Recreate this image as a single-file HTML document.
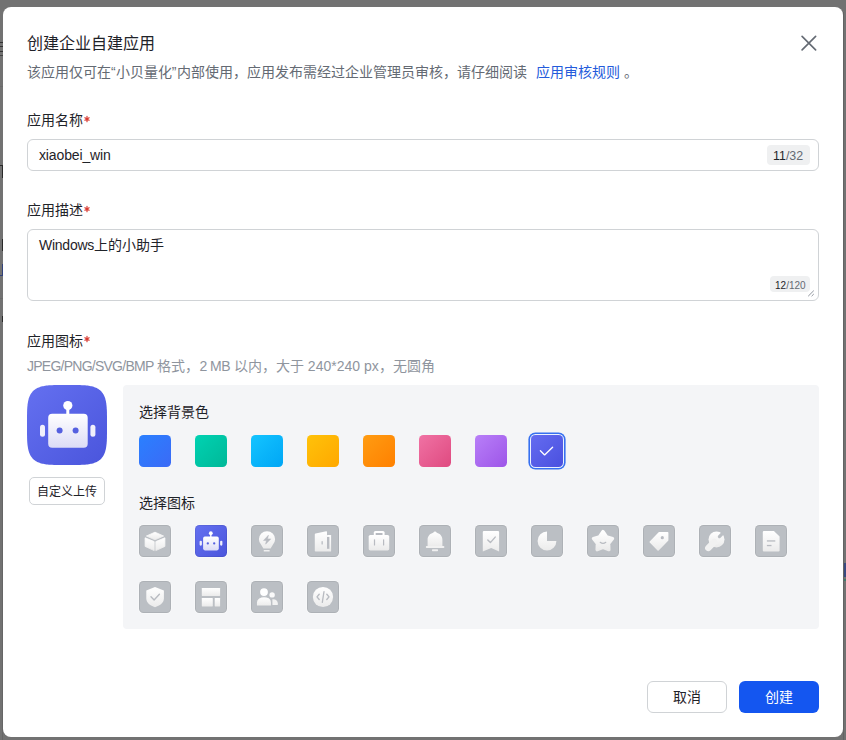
<!DOCTYPE html>
<html lang="zh-CN"><head><meta charset="utf-8">
<style>
*{box-sizing:border-box;margin:0;padding:0}
html,body{width:846px;height:740px;overflow:hidden;background:#727272;font-family:"Liberation Sans",sans-serif;color:#1f2329}
.a{position:absolute;white-space:nowrap}
#modal{position:absolute;left:3px;top:7px;width:840px;height:730px;background:#fff;border-radius:8px}
.t14{font-size:14px;line-height:20px}
.req{color:#f54a45;margin-left:1px}
.input{position:absolute;left:27px;width:792px;border:1px solid #d0d3d6;border-radius:6px;background:#fff}
.cnt{position:absolute;background:#eff0f1;border-radius:4px;color:#646a73}
.cnt b{font-weight:normal;color:#1f2329}
.sw{position:absolute;top:435px;width:32px;height:32px;border-radius:4.5px}
.tile{position:absolute;width:32px;height:32px;border-radius:4.5px;background:#bbbfc4;box-shadow:inset 0 0 0 1px rgba(0,0,0,.07),0 0 0 1px rgba(255,255,255,.3)}
.tile svg{position:absolute;left:0;top:0}
.btn{position:absolute;top:681px;width:80px;height:32px;border-radius:6px;font-size:14px;line-height:30px;text-align:center}
</style></head><body>
<div id="modal"></div>
<!-- page fragments -->
<div class="a" style="left:843px;top:12px;width:1px;height:728px;background:rgba(0,0,0,.13)"></div>
<div class="a" style="left:2px;top:420px;width:1px;height:320px;background:rgba(0,0,0,.1)"></div>
<div class="a" style="left:0;top:42px;width:3px;height:1px;background:#333"></div>
<div class="a" style="left:0;top:46px;width:3px;height:1px;background:#333"></div>
<div class="a" style="left:0;top:51px;width:3px;height:1px;background:#333"></div>
<div class="a" style="left:0;top:55px;width:3px;height:1px;background:#444"></div>
<div class="a" style="left:0;top:86px;width:3px;height:1px;background:#6a6a6a"></div>
<div class="a" style="left:0;top:165px;width:3px;height:1px;background:#2a2a2a"></div>
<div class="a" style="left:2px;top:165px;width:1px;height:13px;background:#2a2a2a"></div>
<div class="a" style="left:2px;top:239px;width:1px;height:12px;background:#2a2a2a"></div>
<div class="a" style="left:0;top:264px;width:3px;height:12px;border-right:1px solid #33427a;border-bottom:1px solid #33427a"></div>
<div class="a" style="left:0;top:298px;width:3px;height:1px;background:#6a6a6a"></div>
<div class="a" style="left:0;top:316px;width:3px;height:6px;border-right:1px solid #2a2a2a"></div>
<div class="a" style="left:844px;top:563px;width:2px;height:14px;background:#3a4a80"></div>
<div class="a" style="left:844px;top:579px;width:2px;height:2px;background:#3f7a6a"></div>


<div class="a" style="left:27px;top:33px;font-size:16px;line-height:22px;color:#1f2329">创建企业自建应用</div>
<svg class="a" style="left:801px;top:35px" width="16" height="16" viewBox="0 0 16 16"><path d="M1.1 1.4L14.6 14.9M14.6 1.4L1.1 14.9" stroke="#646a73" stroke-width="1.6" stroke-linecap="round"/></svg>

<div class="a t14" style="left:27px;top:62px;color:#646a73">该应用仅可在“小贝量化<span style="margin-right:1px">”</span>内部使用，应用发布需经过企业管理员审核，请仔细阅读 <span style="color:#245bdb;margin-left:5px">应用审核规则</span> 。</div>

<div class="a t14" style="left:27px;top:110px">应用名称</div>
<div class="input" style="top:139px;height:32px"></div>
<div class="a t14" style="left:39px;top:145px"><span style="letter-spacing:-0.13px">xiaobei_win</span></div>
<div class="cnt" style="left:767px;top:145px;width:43px;height:20px"></div>
<div class="a" style="left:773px;top:147px;font-size:12.4px;line-height:18px;color:#646a73"><b style="font-weight:normal;color:#1f2329">11</b>/32</div>

<div class="a t14" style="left:27px;top:200px">应用描述</div>
<div class="input" style="top:229px;height:72px"></div>
<div class="a t14" style="left:39px;top:235px"><span style="letter-spacing:-0.25px">Windows</span>上的小助手</div>
<div class="cnt" style="left:770px;top:276px;width:40px;height:16px"></div>
<div class="a" style="left:775px;top:279px;font-size:10px;line-height:14px;color:#646a73"><b style="font-weight:normal;color:#1f2329">12</b>/120</div>
<svg class="a" style="left:807px;top:289px" width="9" height="9" viewBox="0 0 9 9"><path d="M1.2 7.2L6.8 1.6M4.6 7.2L6.8 5" stroke="#8f959e" stroke-width="1"/></svg>

<div class="a t14" style="left:27px;top:331px">应用图标</div>
<div class="a t14" style="left:27px;top:356px;color:#8f959e"><span style="letter-spacing:-0.75px">JPEG/PNG/SVG/BMP</span> 格式，<span style="letter-spacing:-0.5px">2 MB</span> 以内，大于 240*240 px，无圆角</div>


<svg class="a" style="left:82.8px;top:114.9px" width="8" height="8" viewBox="0 0 8 8"><path d="M4 1.3V6.7M1.9 2.7L6.1 5.3M6.1 2.7L1.9 5.3" stroke="#d83931" stroke-width="1.15" stroke-linecap="round"/></svg>
<svg class="a" style="left:82.8px;top:204.9px" width="8" height="8" viewBox="0 0 8 8"><path d="M4 1.3V6.7M1.9 2.7L6.1 5.3M6.1 2.7L1.9 5.3" stroke="#d83931" stroke-width="1.15" stroke-linecap="round"/></svg>
<svg class="a" style="left:82.8px;top:334.9px" width="8" height="8" viewBox="0 0 8 8"><path d="M4 1.3V6.7M1.9 2.7L6.1 5.3M6.1 2.7L1.9 5.3" stroke="#d83931" stroke-width="1.15" stroke-linecap="round"/></svg>
<!-- preview icon -->
<svg class="a" style="left:27px;top:385px" width="80" height="80" viewBox="0 0 80 80">
<defs>
<linearGradient id="pg" x1="0" y1="0" x2="1" y2="1"><stop offset="0" stop-color="#6470f0"/><stop offset="1" stop-color="#4a55dc"/></linearGradient>
<linearGradient id="hg" x1="0" y1="0" x2="0" y2="1"><stop offset="0" stop-color="#ffffff"/><stop offset="1" stop-color="#dcdcf6"/></linearGradient>
</defs>
<path id="sqp" d="M80.00 40.00 L79.99 47.70 L79.96 50.71 L79.92 52.98 L79.85 54.88 L79.76 56.54 L79.66 58.02 L79.54 59.37 L79.40 60.62 L79.24 61.78 L79.06 62.87 L78.86 63.89 L78.64 64.85 L78.40 65.77 L78.14 66.64 L77.86 67.46 L77.56 68.25 L77.24 69.00 L76.90 69.72 L76.54 70.40 L76.16 71.06 L75.76 71.68 L75.33 72.28 L74.88 72.85 L74.41 73.39 L73.91 73.91 L73.39 74.41 L72.85 74.88 L72.28 75.33 L71.68 75.76 L71.06 76.16 L70.40 76.54 L69.72 76.90 L69.00 77.24 L68.25 77.56 L67.46 77.86 L66.64 78.14 L65.77 78.40 L64.85 78.64 L63.89 78.86 L62.87 79.06 L61.78 79.24 L60.62 79.40 L59.37 79.54 L58.02 79.66 L56.54 79.76 L54.88 79.85 L52.98 79.92 L50.71 79.96 L47.70 79.99 L40.00 80.00 L32.30 79.99 L29.29 79.96 L27.02 79.92 L25.12 79.85 L23.46 79.76 L21.98 79.66 L20.63 79.54 L19.38 79.40 L18.22 79.24 L17.13 79.06 L16.11 78.86 L15.15 78.64 L14.23 78.40 L13.36 78.14 L12.54 77.86 L11.75 77.56 L11.00 77.24 L10.28 76.90 L9.60 76.54 L8.94 76.16 L8.32 75.76 L7.72 75.33 L7.15 74.88 L6.61 74.41 L6.09 73.91 L5.59 73.39 L5.12 72.85 L4.67 72.28 L4.24 71.68 L3.84 71.06 L3.46 70.40 L3.10 69.72 L2.76 69.00 L2.44 68.25 L2.14 67.46 L1.86 66.64 L1.60 65.77 L1.36 64.85 L1.14 63.89 L0.94 62.87 L0.76 61.78 L0.60 60.62 L0.46 59.37 L0.34 58.02 L0.24 56.54 L0.15 54.88 L0.08 52.98 L0.04 50.71 L0.01 47.70 L0.00 40.00 L0.01 32.30 L0.04 29.29 L0.08 27.02 L0.15 25.12 L0.24 23.46 L0.34 21.98 L0.46 20.63 L0.60 19.38 L0.76 18.22 L0.94 17.13 L1.14 16.11 L1.36 15.15 L1.60 14.23 L1.86 13.36 L2.14 12.54 L2.44 11.75 L2.76 11.00 L3.10 10.28 L3.46 9.60 L3.84 8.94 L4.24 8.32 L4.67 7.72 L5.12 7.15 L5.59 6.61 L6.09 6.09 L6.61 5.59 L7.15 5.12 L7.72 4.67 L8.32 4.24 L8.94 3.84 L9.60 3.46 L10.28 3.10 L11.00 2.76 L11.75 2.44 L12.54 2.14 L13.36 1.86 L14.23 1.60 L15.15 1.36 L16.11 1.14 L17.13 0.94 L18.22 0.76 L19.38 0.60 L20.63 0.46 L21.98 0.34 L23.46 0.24 L25.12 0.15 L27.02 0.08 L29.29 0.04 L32.30 0.01 L40.00 0.00 L47.70 0.01 L50.71 0.04 L52.98 0.08 L54.88 0.15 L56.54 0.24 L58.02 0.34 L59.37 0.46 L60.62 0.60 L61.78 0.76 L62.87 0.94 L63.89 1.14 L64.85 1.36 L65.77 1.60 L66.64 1.86 L67.46 2.14 L68.25 2.44 L69.00 2.76 L69.72 3.10 L70.40 3.46 L71.06 3.84 L71.68 4.24 L72.28 4.67 L72.85 5.12 L73.39 5.59 L73.91 6.09 L74.41 6.61 L74.88 7.15 L75.33 7.72 L75.76 8.32 L76.16 8.94 L76.54 9.60 L76.90 10.28 L77.24 11.00 L77.56 11.75 L77.86 12.54 L78.14 13.36 L78.40 14.23 L78.64 15.15 L78.86 16.11 L79.06 17.13 L79.24 18.22 L79.40 19.38 L79.54 20.63 L79.66 21.98 L79.76 23.46 L79.85 25.12 L79.92 27.02 L79.96 29.29 L79.99 32.30Z" fill="url(#pg)"/>
<circle cx="40.8" cy="20.6" r="4.6" fill="#fff"/>
<rect x="39.3" y="22" width="3" height="8" fill="#fff"/>
<rect x="21.2" y="28.7" width="39.5" height="34" rx="4" fill="url(#hg)"/>
<rect x="13" y="39.7" width="5" height="12" rx="2.5" fill="#f0f0fb"/>
<rect x="63.4" y="39.7" width="5" height="12" rx="2.5" fill="#f0f0fb"/>
<circle cx="32.6" cy="45.6" r="3" fill="#5560e0"/>
<circle cx="48.6" cy="45.6" r="3" fill="#5560e0"/>
</svg>
<div class="a" style="left:29px;top:477px;width:76px;height:28px;border:1px solid #d0d3d6;border-radius:5px;font-size:12px;line-height:28px;text-align:center">自定义上传</div>

<!-- panel -->
<div class="a" style="left:123px;top:385px;width:696px;height:244px;background:#f4f5f7;border-radius:4px"></div>
<div class="a t14" style="left:139px;top:402px">选择背景色</div>
<div class="sw" style="left:139px;background:linear-gradient(135deg,#2a80ff,#3b6af6)"></div>
<div class="sw" style="left:195px;background:linear-gradient(135deg,#00d2b2,#00b898)"></div>
<div class="sw" style="left:251px;background:linear-gradient(135deg,#14c4ff,#00a6f5)"></div>
<div class="sw" style="left:307px;background:linear-gradient(135deg,#ffc20a,#ffa800)"></div>
<div class="sw" style="left:363px;background:linear-gradient(135deg,#ff9c12,#ff8000)"></div>
<div class="sw" style="left:419px;background:linear-gradient(135deg,#f072a4,#df4a80)"></div>
<div class="sw" style="left:475px;background:linear-gradient(135deg,#b87ff8,#9d55e8)"></div>
<div class="sw" style="left:531px;background:linear-gradient(135deg,#646cf0,#4a50df);box-shadow:0 0 0 1px rgba(255,255,255,.9),0 0 0 2.6px #3670f0"></div>
<svg class="a" style="left:531px;top:435px" width="32" height="32" viewBox="0 0 32 32"><path d="M9.4 15.8L13.6 19.9L21.6 12.3" fill="none" stroke="#fff" stroke-width="1.35" stroke-linecap="round" stroke-linejoin="round"/></svg>

<div class="a t14" style="left:139px;top:493px">选择图标</div>
<!--TILES-->
<svg width="0" height="0" style="position:absolute"><defs>
<linearGradient id="wg" x1="0" y1="0" x2="0" y2="1"><stop offset="0" stop-color="#ffffff"/><stop offset="1" stop-color="#ebebeb"/></linearGradient>
<linearGradient id="hg2" x1="0" y1="0" x2="0" y2="1"><stop offset="0" stop-color="#ffffff"/><stop offset="1" stop-color="#dcdcf6"/></linearGradient>
<linearGradient id="tg" x1="0" y1="0" x2="1" y2="1"><stop offset="0" stop-color="#6470f0"/><stop offset="1" stop-color="#4a55dc"/></linearGradient>
</defs></svg>
<div class="tile" style="left:139px;top:525px;"><svg width="32" height="32" viewBox="0 0 32 32"><g fill="url(#wg)" stroke="url(#wg)" stroke-width="0.8" stroke-linejoin="round">
 <path d="M16 7.2L24.6 11L16 14.8L7.4 11Z"/>
 <path d="M6.1 12.8L15.2 16.6V25.6L6.1 21.4Z"/>
 <path d="M25.9 12.8L16.8 16.6V25.6L25.9 21.4Z"/></g></svg></div>
<div class="tile" style="left:195px;top:525px;background:linear-gradient(135deg,#6470f0,#4a55dc);"><svg width="32" height="32" viewBox="0 0 32 32"><circle cx="15.8" cy="8.2" r="1.9" fill="#fff"/><rect x="15.1" y="9" width="1.4" height="3" fill="#fff"/>
 <rect x="8.1" y="11.6" width="15.7" height="13.8" rx="1.8" fill="url(#hg2)"/>
 <rect x="4.6" y="15.7" width="2.3" height="5" rx="1.1" fill="#eeeefb"/>
 <rect x="25.1" y="15.7" width="2.3" height="5" rx="1.1" fill="#eeeefb"/>
 <circle cx="12.8" cy="18.4" r="1.15" fill="#5560e0"/><circle cx="19.2" cy="18.4" r="1.15" fill="#5560e0"/></svg></div>
<div class="tile" style="left:251px;top:525px;"><svg width="32" height="32" viewBox="0 0 32 32"><path d="M10.3 20A8.1 8.1 0 1 1 21.7 20L19.6 23.6H12.4Z" fill="url(#wg)"/>
 <rect x="12.7" y="25" width="6" height="1.6" rx="0.5" fill="#f0f0f0"/>
 <path d="M17.4 10.2L12.5 15.5H15.4L14.6 19.2L19.8 13.9H16.6Z" fill="#b8bbc1" stroke="#b8bbc1" stroke-width="0.5" stroke-linejoin="round"/></svg></div>
<div class="tile" style="left:307px;top:525px;"><svg width="32" height="32" viewBox="0 0 32 32"><path d="M7.8 9.4Q7.8 8.6 8.6 8.4L19.2 6.3Q20 6.2 20 7V26.5H8.6Q7.8 26.5 7.8 25.7Z" fill="url(#wg)"/>
 <rect x="20" y="10" width="4.1" height="16.5" rx="0.6" fill="url(#wg)"/>
 <rect x="20" y="11.9" width="2.4" height="11.9" fill="#b8bbc1"/>
 <rect x="14.5" y="16.1" width="1.3" height="3.5" rx="0.65" fill="#b8bbc1"/></svg></div>
<div class="tile" style="left:363px;top:525px;"><svg width="32" height="32" viewBox="0 0 32 32"><rect x="10.8" y="5.9" width="10.8" height="6" rx="1.6" fill="#fff"/>
 <rect x="12.7" y="8" width="6.8" height="2.2" fill="#b8bbc1"/>
 <rect x="5.7" y="10" width="20.5" height="15.4" rx="1.6" fill="url(#wg)"/>
 <rect x="10.9" y="14.2" width="1.2" height="6.4" rx="0.6" fill="#b8bbc1"/>
 <rect x="20" y="14.2" width="1.2" height="6.4" rx="0.6" fill="#b8bbc1"/></svg></div>
<div class="tile" style="left:419px;top:525px;"><svg width="32" height="32" viewBox="0 0 32 32"><path d="M8.6 21.4V14.8C8.6 11.2 11 8.6 14.2 7.8Q15 6.5 16 6.5Q17 6.5 17.8 7.8C21 8.6 23.4 11.2 23.4 14.8V21.4Z" fill="url(#wg)"/>
 <rect x="6.8" y="21" width="18.6" height="1.9" rx="0.9" fill="#f1f1f1"/>
 <rect x="13" y="24.3" width="6" height="1.9" rx="0.6" fill="#f0f0f0"/></svg></div>
<div class="tile" style="left:475px;top:525px;"><svg width="32" height="32" viewBox="0 0 32 32"><path d="M7.8 7Q7.8 5.9 8.9 5.9H23Q24.1 5.9 24.1 7V26.5L16.2 23.1L7.8 26.5Z" fill="url(#wg)"/>
 <path d="M12.8 14.9L15.4 17.6L20.2 12.1" fill="none" stroke="#b8bbc1" stroke-width="1.4" stroke-linecap="round" stroke-linejoin="round"/></svg></div>
<div class="tile" style="left:531px;top:525px;"><svg width="32" height="32" viewBox="0 0 32 32"><path d="M16 16V6.6A9.4 9.4 0 1 0 25.4 16Z" fill="url(#wg)"/></svg></div>
<div class="tile" style="left:587px;top:525px;"><svg width="32" height="32" viewBox="0 0 32 32"><path d="M16.00 6.50 L19.53 11.75 L25.61 13.48 L21.71 18.45 L21.94 24.77 L16.00 22.60 L10.06 24.77 L10.29 18.45 L6.39 13.48 L12.47 11.75Z" fill="url(#wg)" stroke="url(#wg)" stroke-width="3.2" stroke-linejoin="round"/>
 <path d="M13.2 17.3Q16 19.6 18.8 17.3" fill="none" stroke="#b8bbc1" stroke-width="1.2" stroke-linecap="round"/></svg></div>
<div class="tile" style="left:643px;top:525px;"><svg width="32" height="32" viewBox="0 0 32 32"><path d="M7.3 17L16.2 7.8H24.6V15.2L15.1 24.9Z" fill="url(#wg)" stroke="url(#wg)" stroke-width="1.6" stroke-linejoin="round"/>
 <circle cx="19.3" cy="12.7" r="1.6" fill="#b8bbc1"/></svg></div>
<div class="tile" style="left:699px;top:525px;"><svg width="32" height="32" viewBox="0 0 32 32"><circle cx="17.5" cy="14.4" r="8" fill="url(#wg)"/>
 <path d="M15.2 17L9.3 22.9" stroke="#f1f1f1" stroke-width="6.4" stroke-linecap="round"/>
 <path d="M20.4 11.6L25.6 6.4" stroke="#bbbfc4" stroke-width="3.2" stroke-linecap="round"/></svg></div>
<div class="tile" style="left:755px;top:525px;"><svg width="32" height="32" viewBox="0 0 32 32"><path d="M7.8 7Q7.8 5.9 8.9 5.9H18.9L24.6 11.4V25.4Q24.6 26.5 23.5 26.5H8.9Q7.8 26.5 7.8 25.4Z" fill="url(#wg)"/>
 <rect x="11.9" y="15.3" width="8.4" height="1.3" fill="#b8bbc1"/>
 <rect x="11.9" y="19.9" width="4.6" height="1.3" fill="#b8bbc1"/></svg></div>
<div class="tile" style="left:139px;top:581px;"><svg width="32" height="32" viewBox="0 0 32 32"><path d="M16 5.9L24.9 9.6V17.6C24.9 21.9 20.7 24.8 16 26.2C11.3 24.8 7.3 21.9 7.3 17.6V9.6Z" fill="url(#wg)"/>
 <path d="M12 15.8L15.1 18.9L20.4 13.3" fill="none" stroke="#b8bbc1" stroke-width="1.4" stroke-linecap="round" stroke-linejoin="round"/></svg></div>
<div class="tile" style="left:195px;top:581px;"><svg width="32" height="32" viewBox="0 0 32 32"><rect x="6.8" y="7" width="18.3" height="7.9" rx="0.4" fill="url(#wg)"/>
 <rect x="6.8" y="17" width="11" height="8.4" rx="0.4" fill="url(#wg)"/>
 <rect x="19.7" y="17" width="5.4" height="8.4" rx="0.4" fill="url(#wg)"/></svg></div>
<div class="tile" style="left:251px;top:581px;"><svg width="32" height="32" viewBox="0 0 32 32"><circle cx="21.1" cy="13.9" r="2.7" fill="#fafafa"/>
 <path d="M21.4 24.1V18.2C24.6 17.8 26.8 19.6 26.8 22.2V24.1Z" fill="#f2f2f2"/>
 <circle cx="13" cy="11.1" r="3.9" fill="#fff"/>
 <path d="M5.4 25.1V21.4C5.4 17.9 8.6 15.7 13 15.7C17.4 15.7 20.5 17.9 20.5 21.4V25.1Z" fill="url(#wg)" stroke="#bbbfc4" stroke-width="1.1"/></svg></div>
<div class="tile" style="left:307px;top:581px;"><svg width="32" height="32" viewBox="0 0 32 32"><circle cx="16" cy="16" r="10.1" fill="url(#wg)"/>
 <path d="M12.2 13.3L10 15.9L12.2 18.5M19.8 13.3L22 15.9L19.8 18.5" fill="none" stroke="#b8bbc1" stroke-width="1.4" stroke-linecap="round" stroke-linejoin="round"/>
 <path d="M17 10.6L15.3 21.3" stroke="#b8bbc1" stroke-width="1.3" stroke-linecap="round"/></svg></div>
<!--/TILES-->

<!-- footer -->
<div class="btn" style="left:647px;border:1px solid #d0d3d6;color:#1f2329">取消</div>
<div class="btn" style="left:739px;background:#1456f0;color:#fff;line-height:32px">创建</div>
</body></html>
